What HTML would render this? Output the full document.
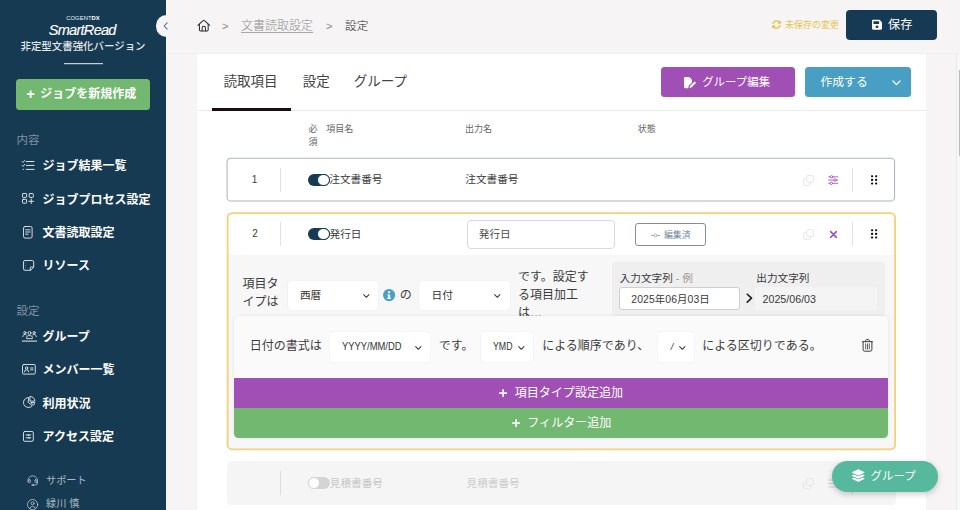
<!DOCTYPE html>
<html lang="ja">
<head>
<meta charset="utf-8">
<title>SmartRead - 設定</title>
<style>
*{box-sizing:border-box;margin:0;padding:0}
html,body{width:960px;height:510px;overflow:hidden}
body{position:relative;background:#f6f4f5;font-family:"Liberation Sans","Noto Sans CJK JP",sans-serif;color:#333;font-size:12px}
.abs{position:absolute;white-space:nowrap}
.t{position:absolute;white-space:nowrap;line-height:20px;height:20px}
svg{position:absolute;overflow:visible}
/* sidebar */
#side{position:absolute;left:0;top:0;width:166.200px;height:510px;background:#173a53;color:#fff}
#side .c{position:absolute;left:0;width:166px;text-align:center;white-space:nowrap}
#side .m{position:absolute;left:42.5px;font-weight:700;font-size:12px;line-height:20px;height:20px;white-space:nowrap;color:#fff}
#side .h{position:absolute;left:16.5px;font-size:11.5px;line-height:20px;height:20px;color:#7f92a1}
#side .s{position:absolute;left:46px;font-size:10.2px;line-height:20px;height:20px;color:#a9b8c3;white-space:nowrap}
#newjob{position:absolute;left:16px;top:79.300px;width:134.300px;height:30.300px;border-radius:3.5px;background:#72b870;color:#fff;font-weight:700;font-size:12px;line-height:30px;text-align:center;white-space:nowrap}
#collapse{position:absolute;left:155.600px;top:15.200px;width:21.800px;height:21.800px;border-radius:50%;background:#f6f4f5}
/* header */
#hdr{position:absolute;left:166px;top:0;width:794px;height:53.800px;border-bottom:1px solid #f0eeee;border-left:1px solid #faf9fa}
#save{position:absolute;left:846.200px;top:10px;width:91px;height:30px;border-radius:4px;background:#163a54}
/* panel */
#panel{position:absolute;left:196.500px;top:53.800px;width:729.500px;height:460px;background:#fff}
#tabline{position:absolute;left:196.500px;top:110px;width:729px;height:1px;background:#ebebeb}
#tabul{position:absolute;left:211.5px;top:107.7px;width:79px;height:3.3px;background:#1a0f0f}
.tab{position:absolute;font-size:13.500px;line-height:20px;height:20px;color:#444;white-space:nowrap}
.btn{position:absolute;top:67px;height:30px;border-radius:3.5px;color:#fff}
.colh{position:absolute;font-size:9px;line-height:13px;color:#666;font-weight:400;white-space:nowrap}
.row{position:absolute;left:227px;width:669px;border-radius:4.5px}
.vd{position:absolute;width:1px;background:#e2e2e2}
.tg{position:absolute;width:21.5px;height:12.4px;border-radius:7px;background:#163a54}
.tg i{position:absolute;right:0;top:0;width:12.400px;height:12.400px;border-radius:50%;background:#fff;border:1.100px solid #163a54}
.tg.off{background:#d4d4d4}
.tg.off i{right:auto;left:0;border-color:#d4d4d4}
.nm{position:absolute;font-size:10.650px;line-height:20px;height:20px;color:#3a3a3a;white-space:nowrap}
.sel{position:absolute;background:#fff;border-radius:4px;height:29.800px;box-shadow:0 0 0 0.600px #efefef}
.sel span{position:absolute;top:0;line-height:29px;font-size:10.650px;color:#333;white-space:nowrap}
.t12{position:absolute;font-size:12px;color:#3c3c3c;white-space:nowrap;line-height:20px}
.nar{font-family:"Liberation Sans",sans-serif}
</style>
</head>
<body>

<!-- ============ main header ============ -->
<div id="hdr"></div>
<svg style="left:196.800px;top:18.900px" width="13.600" height="12.800" viewBox="0 0 14 13" fill="none" stroke="#2b2b2b" stroke-width="1.050" stroke-linejoin="round" stroke-linecap="round"><path d="M0.900 6.400 L6.300 1.500 A1 1 0 0 1 7.700 1.500 L13.100 6.400"/><path d="M2.500 5.200 V11.100 A1.100 1.100 0 0 0 3.600 12.200 H10.400 A1.100 1.100 0 0 0 11.500 11.100 V5.200"/><path d="M5.300 12.100 V9 A1.700 1.700 0 0 1 8.700 9 V12.100"/></svg>
<div class="t" style="left:222px;top:16px;font-size:11px;color:#8a8a8a">&gt;</div>
<div class="t" style="left:241px;top:16px;font-size:12px;font-weight:300;color:#8e8e8e;text-decoration:underline;text-decoration-thickness:0.800px;text-decoration-color:#a8a8a8;text-underline-offset:2px">文書読取設定</div>
<div class="t" style="left:326px;top:16px;font-size:11px;color:#8a8a8a">&gt;</div>
<div class="t" style="left:345px;top:16px;font-size:11.700px;font-weight:300;color:#1e1e1e">設定</div>

<svg style="left:771.5px;top:20px" width="9" height="9" viewBox="0 0 512 512"><path fill="#e8c347" d="M370.7 133.3C339.5 104 298.900 87.900 255.800 88c-77.500.100-144.300 53.200-162.800 126.900-1.300 5.400-6.100 9.200-11.700 9.200H24.100c-7.500 0-13.200-6.800-11.800-14.200C33.900 94.900 134.800 8 256 8c66.400 0 126.800 26.100 171.300 68.700L463 41C478.100 25.900 504 36.600 504 57.900V192c0 13.300-10.700 24-24 24H345.900c-21.400 0-32.100-25.900-17-41l41.800-41.700zM32 296h134.100c21.400 0 32.100 25.900 17 41l-41.800 41.800c31.300 29.300 71.800 45.400 114.900 45.300 77.400-.100 144.300-53.100 162.800-126.800 1.300-5.400 6.100-9.200 11.700-9.200h57.300c7.500 0 13.200 6.800 11.800 14.200C478.100 417.100 377.200 504 256 504c-66.400 0-126.800-26.100-171.300-68.700L49 471c-15.100 15.100-41 4.400-41-16.900V320c0-13.300 10.700-24 24-24z"/></svg>
<div class="t" style="left:785px;top:14.5px;font-size:9px;color:#e8c347">未保存の変更</div>
<div id="save"></div>
<svg style="left:871.800px;top:19.300px" width="10" height="11.400" viewBox="0 0 448 512"><path fill="#fff" d="M433.900 129.900l-83.900-83.900A48 48 0 0 0 316.100 32H48C21.500 32 0 53.500 0 80v352c0 26.500 21.500 48 48 48h352c26.500 0 48-21.500 48-48V163.900a48 48 0 0 0-14.100-33.900zM224 416c-35.300 0-64-28.700-64-64 0-35.300 28.700-64 64-64s64 28.700 64 64c0 35.300-28.700 64-64 64zm96-304.500V212c0 6.600-5.400 12-12 12H76c-6.600 0-12-5.400-12-12V108c0-6.600 5.400-12 12-12h228.500c3.200 0 6.200 1.300 8.500 3.500l3.500 3.500A12 12 0 0 1 320 111.500z"/></svg>
<div class="t" style="left:888px;top:15px;font-size:12.2px;color:#fff">保存</div>

<!-- ============ white panel ============ -->
<div id="panel"></div>
<div id="tabline"></div>
<div id="tabul"></div>
<div class="tab" style="left:223.400px;top:71.500px">読取項目</div>
<div class="tab" style="left:302.850px;top:71.500px">設定</div>
<div class="tab" style="left:353.700px;top:71.500px">グループ</div>

<div class="btn" style="left:661px;width:133.5px;background:#a04fb5"></div>
<svg style="left:683.500px;top:76.500px" width="12" height="11.200" viewBox="0 0 12 11.200"><path fill="#fff" d="M0 1.100 A1.100 1.100 0 0 1 1.100 0 H5.300 L8 2.700 V5.400 L4.700 8.700 L4.300 11.200 H1.100 A1.100 1.100 0 0 1 0 10.100 Z"/><path fill="#fff" d="M5.600 10.900 L6 9.100 L10.300 4.800 A0.600 0.600 0 0 1 11.100 4.800 L11.700 5.400 A0.600 0.600 0 0 1 11.700 6.200 L7.400 10.500 Z"/></svg>
<div class="t" style="left:702.200px;top:72px;font-size:11.450px;color:#fff">グループ編集</div>

<div class="btn" style="left:805px;width:106px;background:#489fc3"></div>
<div class="t" style="left:820.500px;top:72px;font-size:11.800px;color:#fff">作成する</div>
<svg style="left:891.500px;top:80px" width="9" height="6" viewBox="0 0 9 6" fill="none" stroke="#fff" stroke-width="1.3" stroke-linecap="round" stroke-linejoin="round"><path d="M1 1 L4.500 4.600 L8 1"/></svg>

<!-- column headers -->
<div class="colh" style="left:308.500px;top:123px">必<br>須</div>
<div class="colh" style="left:326.300px;top:123px">項目名</div>
<div class="colh" style="left:465px;top:123px">出力名</div>
<div class="colh" style="left:637.700px;top:123px">状態</div>

<!-- ROWS-START -->
<!-- ===== row 1 ===== -->
<svg style="left:226px;top:157px" width="670" height="46" viewBox="0 0 670 46" fill="none"><rect x="1.050" y="1.250" width="667.500" height="42.800" rx="3.600" stroke="#a9b6c1" stroke-width="1.050" fill="#fff"/></svg>
<div class="nm" style="left:244.500px;width:20px;text-align:center;top:169.600px;font-size:10px">1</div>
<div class="vd" style="left:280.200px;top:167.800px;height:24px"></div>
<div class="tg" style="left:308px;top:173.500px"><i></i></div>
<div class="nm" style="left:329.300px;top:169.100px">注文書番号</div>
<div class="nm" style="left:465.300px;top:169.100px">注文書番号</div>
<svg class="cp" style="left:802.800px;top:174.700px" width="11" height="11" viewBox="0 0 11 11" fill="none" stroke="#e6e6e6" stroke-width="1"><rect x="3.700" y="0.600" width="6.700" height="6.700" rx="1.200"/><path d="M3.700 3.600 H1.800 A1.200 1.200 0 0 0 0.600 4.800 V9.200 A1.200 1.200 0 0 0 1.800 10.400 H6.200 A1.200 1.200 0 0 0 7.400 9.200 V7.300"/></svg>
<svg style="left:828px;top:174.600px" width="10.400" height="10.200" viewBox="0 0 11 11" fill="none" stroke="#a557b9" stroke-width="0.950" stroke-linecap="round"><path d="M0.500 2 H10.500 M0.500 5.500 H10.500 M0.500 9 H10.500"/><circle cx="3.800" cy="2" r="1.350" fill="#fff"/><circle cx="7.400" cy="5.500" r="1.350" fill="#fff"/><circle cx="3.400" cy="9" r="1.350" fill="#fff"/></svg>
<div class="vd" style="left:852px;top:167.800px;height:24px"></div>
<svg class="dh" style="left:870.800px;top:174.700px" width="6.600" height="9.800" viewBox="0 0 7 10" fill="#111"><rect x="0" y="0" width="2.300" height="2.300" rx="0.800"/><rect x="4.300" y="0" width="2.300" height="2.300" rx="0.800"/><rect x="0" y="3.850" width="2.300" height="2.300" rx="0.800"/><rect x="4.300" y="3.850" width="2.300" height="2.300" rx="0.800"/><rect x="0" y="7.700" width="2.300" height="2.300" rx="0.800"/><rect x="4.300" y="7.700" width="2.300" height="2.300" rx="0.800"/></svg>

<!-- ===== row 2 (expanded) ===== -->
<div class="abs" style="left:227px;top:212.500px;width:668.500px;height:237.300px;background:#f7f7f7;border-radius:5px;overflow:hidden"><div style="position:absolute;left:0;top:0;width:100%;height:42.250px;background:#fff"></div></div>
<svg style="left:226px;top:212px" width="671" height="239" viewBox="0 0 671 239" fill="none"><rect x="1.600" y="1.100" width="667.500" height="236.200" rx="4.600" stroke="#f3d07a" stroke-width="1.800"/></svg>
<div class="nm" style="left:245px;width:20px;text-align:center;top:224.400px;font-size:10px">2</div>
<div class="vd" style="left:280.200px;top:221.500px;height:24.500px"></div>
<div class="tg" style="left:308px;top:228.100px"><i></i></div>
<div class="nm" style="left:329.500px;top:223.500px">発行日</div>
<div class="abs" style="left:466.800px;top:220px;width:148px;height:29px;border:1px solid #d9d9e3;border-radius:4px;background:#fff"></div>
<div class="nm" style="left:478.800px;top:224.300px;color:#4a4a4a">発行日</div>
<div class="abs" style="left:635.400px;top:223.300px;width:70.400px;height:23.200px;border:1px solid #7b8f9e;border-radius:3px;background:#fff"></div>
<svg style="left:651px;top:232.500px" width="9" height="5" viewBox="0 0 9 5" fill="none" stroke="#7d8f9d" stroke-width="0.700"><circle cx="4.500" cy="2.500" r="1.500"/><path d="M0 2.500 H3 M6 2.500 H9"/></svg>
<div class="nm" style="left:664px;top:224.800px;font-size:8.900px;color:#71889a">編集済</div>
<svg class="cp" style="left:802.800px;top:228.700px" width="11" height="11" viewBox="0 0 11 11" fill="none" stroke="#e6e6e6" stroke-width="1"><rect x="3.700" y="0.600" width="6.700" height="6.700" rx="1.200"/><path d="M3.700 3.600 H1.800 A1.200 1.200 0 0 0 0.600 4.800 V9.200 A1.200 1.200 0 0 0 1.800 10.400 H6.200 A1.200 1.200 0 0 0 7.400 9.200 V7.300"/></svg>
<svg style="left:829.800px;top:230.900px" width="7" height="7" viewBox="0 0 7 7" fill="none" stroke="#a04fb5" stroke-width="1.550" stroke-linecap="round"><path d="M0.600 0.600 L6.400 6.400 M6.400 0.600 L0.600 6.400"/></svg>
<div class="vd" style="left:852px;top:221.500px;height:24.500px"></div>
<svg class="dh" style="left:870.800px;top:228.900px" width="6.600" height="9.800" viewBox="0 0 7 10" fill="#111"><rect x="0" y="0" width="2.300" height="2.300" rx="0.800"/><rect x="4.300" y="0" width="2.300" height="2.300" rx="0.800"/><rect x="0" y="3.850" width="2.300" height="2.300" rx="0.800"/><rect x="4.300" y="3.850" width="2.300" height="2.300" rx="0.800"/><rect x="0" y="7.700" width="2.300" height="2.300" rx="0.800"/><rect x="4.300" y="7.700" width="2.300" height="2.300" rx="0.800"/></svg>

<!-- type line -->
<div class="t12" style="left:242.600px;top:276px;line-height:17.800px">項目タ<br>イプは</div>
<div class="sel" style="left:288.100px;top:280.700px;width:89.700px"><span style="left:11.800px">西暦</span></div>
<svg class="chv" style="left:362.700px;top:293.900px" width="6.600" height="4.125" viewBox="0 0 8 5" fill="none" stroke="#3a3a3a" stroke-width="1.250" stroke-linecap="round" stroke-linejoin="round"><path d="M0.800 0.800 L4 4 L7.200 0.800"/></svg>
<svg style="left:383px;top:289.300px" width="12.200" height="12.200" viewBox="0 0 12 12"><circle cx="6" cy="6" r="6" fill="#4a9fc6"/><rect x="5" y="2.300" width="2" height="2" rx="0.500" fill="#fff"/><path d="M4.300 5.300 H7 V8.700 H7.900 V9.800 H4.200 V8.700 H5.100 V6.400 H4.300 Z" fill="#fff"/></svg>
<div class="t12" style="left:399.800px;top:284.600px">の</div>
<div class="sel" style="left:419.400px;top:280.700px;width:90.200px"><span style="left:12.200px">日付</span></div>
<svg class="chv" style="left:494.200px;top:293.900px" width="6.600" height="4.125" viewBox="0 0 8 5" fill="none" stroke="#3a3a3a" stroke-width="1.250" stroke-linecap="round" stroke-linejoin="round"><path d="M0.800 0.800 L4 4 L7.200 0.800"/></svg>
<div class="t12" style="left:518px;top:267.600px;line-height:18.250px">です。設定す<br>る項目加工<br>は…</div>

<!-- example box -->
<div class="abs" style="left:612px;top:262px;width:272.500px;height:60px;background:#efefef;border-radius:4px"></div>
<div class="nm" style="left:619.700px;top:267.900px">入力文字列 <span style="color:#999">- 例</span></div>
<div class="abs" style="left:619.400px;top:287px;width:120.600px;height:22.600px;background:#fff;border:1px solid #cfcfcf;border-radius:3px"></div>
<div class="nm nar" style="left:631.300px;top:288.500px;font-size:10.400px;letter-spacing:0.100px">2025<span style="font-family:'Noto Sans CJK JP',sans-serif">年</span>06<span style="font-family:'Noto Sans CJK JP',sans-serif">月</span>03<span style="font-family:'Noto Sans CJK JP',sans-serif">日</span></div>
<svg style="left:745.600px;top:292.600px" width="6.800" height="10.400" viewBox="0 0 6.500 10" fill="none" stroke="#222" stroke-width="1.600" stroke-linecap="round" stroke-linejoin="round"><path d="M1.200 1.200 L5.300 5 L1.200 8.800"/></svg>
<div class="nm" style="left:756.300px;top:267.900px">出力文字列</div>
<div class="abs" style="left:755.300px;top:287px;width:121.500px;height:22.600px;background:#f4f4f4;border-radius:3px"></div>
<div class="nm nar" style="left:762.500px;top:288.500px;font-size:10.700px">2025/06/03</div>

<!-- inner panel -->
<div class="abs" style="left:234px;top:316px;width:654px;height:122px;background:#fafafa;border-radius:4.500px;box-shadow:0 0 3px rgba(0,0,0,0.10)"></div>
<div class="t12" style="left:249.700px;top:335.600px">日付の書式は</div>
<div class="sel" style="left:330px;top:332.300px;width:100.300px"><span class="nar" style="left:11.800px;font-size:10.700px;transform:scaleX(0.880);transform-origin:0 50%">YYYY/MM/DD</span></div>
<svg class="chv" style="left:415.200px;top:345.700px" width="6.600" height="4.125" viewBox="0 0 8 5" fill="none" stroke="#3a3a3a" stroke-width="1.250" stroke-linecap="round" stroke-linejoin="round"><path d="M0.800 0.800 L4 4 L7.200 0.800"/></svg>
<div class="t12" style="left:438.700px;top:335.600px">です。</div>
<div class="sel" style="left:481.300px;top:332.300px;width:52.200px"><span class="nar" style="left:12.200px;font-size:10.700px;transform:scaleX(0.820);transform-origin:0 50%">YMD</span></div>
<svg class="chv" style="left:518.200px;top:345.700px" width="6.600" height="4.125" viewBox="0 0 8 5" fill="none" stroke="#3a3a3a" stroke-width="1.250" stroke-linecap="round" stroke-linejoin="round"><path d="M0.800 0.800 L4 4 L7.200 0.800"/></svg>
<div class="t12" style="left:542.200px;top:335.600px">による順序であり、</div>
<div class="sel" style="left:657.800px;top:332.300px;width:36px"><span class="nar" style="left:13px;font-size:9.500px;font-style:italic">/</span></div>
<svg class="chv" style="left:678.700px;top:345.700px" width="6.600" height="4.125" viewBox="0 0 8 5" fill="none" stroke="#3a3a3a" stroke-width="1.250" stroke-linecap="round" stroke-linejoin="round"><path d="M0.800 0.800 L4 4 L7.200 0.800"/></svg>
<div class="t12" style="left:702.200px;top:335.600px">による区切りである。</div>
<svg style="left:862.400px;top:339.200px" width="11" height="12.800" viewBox="0 0 11 12.800" fill="none" stroke="#3a3a3a" stroke-width="1" stroke-linecap="round" stroke-linejoin="round"><path d="M0.600 2.700 H10.400"/><path d="M3.600 2.600 V1.700 A1.100 1.100 0 0 1 4.700 0.600 H6.300 A1.100 1.100 0 0 1 7.400 1.700 V2.600"/><path d="M1.100 2.800 V10.600 A1.600 1.600 0 0 0 2.700 12.200 H8.300 A1.600 1.600 0 0 0 9.900 10.600 V2.800"/><path d="M3.700 4.900 V10 M5.500 4.900 V10 M7.300 4.900 V10" stroke-width="0.800"/></svg>
<div class="abs" style="left:234px;top:377.500px;width:654px;height:30px;background:#a04fb5"></div>
<div class="abs" style="left:234px;top:407.500px;width:654px;height:30.500px;background:#72b870;border-radius:0 0 4.500px 4.500px"></div>
<svg class="pl" style="left:499px;top:389px" width="8.200" height="8.200" viewBox="0 0 8 8" fill="none" stroke="#fff" stroke-width="1.600" stroke-linecap="round"><path d="M4 0.800 V7.200 M0.800 4 H7.200"/></svg>
<div class="t" style="left:514.700px;top:382.600px;font-size:12.050px;color:#fff">項目タイプ設定追加</div>
<svg class="pl" style="left:512px;top:419px" width="8.200" height="8.200" viewBox="0 0 8 8" fill="none" stroke="#fff" stroke-width="1.600" stroke-linecap="round"><path d="M4 0.800 V7.200 M0.800 4 H7.200"/></svg>
<div class="t" style="left:527.300px;top:412.700px;font-size:12.050px;color:#fff">フィルター追加</div>

<!-- ===== row 3 (disabled) ===== -->
<div class="row" style="top:461px;height:43.500px;background:#f5f5f5"></div>
<div class="vd" style="left:280.200px;top:471px;height:23.500px;background:#dcdcdc"></div>
<div class="tg off" style="left:308px;top:476.600px"><i></i></div>
<div class="nm" style="left:329.800px;top:472.800px;color:#c6c6c6">見積書番号</div>
<div class="nm" style="left:466.500px;top:472.800px;color:#cccccc">見積書番号</div>
<svg class="cp" style="left:802.800px;top:477.500px" width="11" height="11" viewBox="0 0 11 11" fill="none" stroke="#e6e6e6" stroke-width="1"><rect x="3.700" y="0.600" width="6.700" height="6.700" rx="1.200"/><path d="M3.700 3.600 H1.800 A1.200 1.200 0 0 0 0.600 4.800 V9.200 A1.200 1.200 0 0 0 1.800 10.400 H6.200 A1.200 1.200 0 0 0 7.400 9.200 V7.300"/></svg>
<svg style="left:828px;top:477.500px" width="11" height="11" viewBox="0 0 11 11" fill="none" stroke="#dcc6e2" stroke-width="0.900" stroke-linecap="round"><path d="M0.500 2 H10.500 M0.500 5.500 H10.500 M0.500 9 H10.500"/></svg>
<div class="vd" style="left:852px;top:471px;height:23.500px;background:#dcdcdc"></div>

<!-- floating group button -->
<div class="abs" style="left:831.500px;top:461.200px;width:106px;height:30.700px;border-radius:16px;background:#56b89c;box-shadow:0 2px 6px rgba(0,0,0,0.22)"></div>
<svg style="left:851.700px;top:469.300px" width="12.500" height="13" viewBox="0 0 512 512"><path fill="#fff" d="M12.400 148l232.900 105.700c6.800 3.100 14.500 3.100 21.300 0l232.900-105.700c16.600-7.500 16.600-32.500 0-40L266.700 2.300a25.600 25.600 0 0 0-21.300 0L12.400 108c-16.600 7.500-16.600 32.500 0 40zm487.200 88.300l-58.100-26.300-161.600 73.300c-7.600 3.400-15.600 5.200-23.900 5.200s-16.300-1.800-23.900-5.200L70.500 210l-58.100 26.300c-16.600 7.500-16.600 32.500 0 40l232.900 105.600c6.800 3.100 14.500 3.100 21.300 0L499.600 276.300c16.600-7.500 16.600-32.500 0-40zm0 127.800l-57.900-26.200-161.900 73.300c-7.600 3.400-15.600 5.200-23.900 5.200s-16.300-1.800-23.900-5.200L70.300 337.900 12.400 364.100c-16.600 7.500-16.600 32.500 0 40l232.900 105.600c6.800 3.100 14.500 3.100 21.300 0L499.600 404.100c16.600-7.500 16.600-32.500 0-40z"/></svg>
<div class="t" style="left:870.400px;top:466.300px;font-size:11.500px;color:#fff">グループ</div>
<!-- ROWS-END -->

<!-- ============ sidebar ============ -->
<div id="side">
  <div class="c" style="top:13.900px;font-size:5.800px;line-height:8px;letter-spacing:0.100px;color:#eaeff2">COGENT<b style="color:#fff">DX</b></div>
  <div class="c" style="top:20px;left:-0.800px;font-size:14.600px;line-height:20px;font-style:italic;letter-spacing:-0.750px;color:#fff;-webkit-text-stroke:0.150px #fff">SmartRead</div>
  <div class="c" style="top:37px;font-size:10.450px;font-weight:500;line-height:20px;color:#e3e8ec">非定型文書強化バージョン</div>
  <div class="abs" style="left:64px;top:63px;width:38.500px;height:1px;background:#c6d0d8;box-shadow:0 1px 0 rgba(198,208,216,0.220)"></div>
  <div id="newjob"><span style="position:absolute;left:10.600px;top:-0.500px;font-size:14px">+</span><span style="position:absolute;left:24.200px;top:0">ジョブを新規作成</span></div>
  <div class="h" style="top:130px">内容</div>
  <div class="m" style="top:156.200px">ジョブ結果一覧</div>
  <div class="m" style="top:189.500px">ジョブプロセス設定</div>
  <div class="m" style="top:222.700px">文書読取設定</div>
  <div class="m" style="top:255.700px">リソース</div>
  <div class="h" style="top:300.500px">設定</div>
  <div class="m" style="top:326.700px">グループ</div>
  <div class="m" style="top:360.000px">メンバー一覧</div>
  <div class="m" style="top:393.500px">利用状況</div>
  <div class="m" style="top:426.700px">アクセス設定</div>
  <div class="s" style="top:470.500px">サポート</div>
  <div class="s" style="top:494px">緑川 慎</div>
  <!-- ICONS-START -->
  <svg style="left:22px;top:160px" width="12.500" height="10.500" viewBox="0 0 12.500 10.500" fill="none" stroke="#e6ebef" stroke-width="0.950" stroke-linecap="round" stroke-linejoin="round"><path d="M4.200 1.500 H12.100 M4.200 5.400 H12.100 M4.200 9.400 H12.100"/><path d="M0.200 1.600 L1 2.500 L2.700 0.400 M0.200 5.500 L1 6.400 L2.700 4.300" stroke-width="0.850"/><circle cx="1.300" cy="9.400" r="0.600" fill="#e6ebef" stroke="none"/></svg>
  <svg style="left:22.100px;top:193.300px" width="11.900" height="10.700" viewBox="0 0 11.900 10.700" fill="none" stroke="#e6ebef" stroke-width="0.950" stroke-linecap="round" stroke-linejoin="round"><rect x="0.500" y="0.500" width="4.100" height="3.900" rx="0.700"/><rect x="7.200" y="0.500" width="4.100" height="3.900" rx="0.700"/><rect x="0.500" y="6.300" width="4.100" height="3.900" rx="0.700"/><path d="M6.900 8.300 H11.600 M9.250 6 V10.500"/></svg>
  <svg style="left:23px;top:225.600px" width="9.600" height="12.600" viewBox="0 0 9.600 12.600" fill="none" stroke="#e6ebef" stroke-width="0.900" stroke-linecap="round" stroke-linejoin="round"><rect x="0.500" y="0.500" width="8.600" height="11.600" rx="1.600"/><path d="M2.600 3.800 H7 M2.600 6 H7 M2.600 8.200 H5.200"/></svg>
  <svg style="left:22.500px;top:259.800px" width="11.200" height="10.800" viewBox="0 0 11.200 10.800" fill="none" stroke="#e6ebef" stroke-width="0.900" stroke-linecap="round" stroke-linejoin="round"><path d="M7.200 10.300 H2 A1.500 1.500 0 0 1 0.500 8.800 V2 A1.500 1.500 0 0 1 2 0.500 H9.200 A1.500 1.500 0 0 1 10.700 2 V6.900 Z"/><path d="M10.600 7 H8.300 A1 1 0 0 0 7.300 8 V10.200"/><circle cx="2.700" cy="3" r="0.350" fill="#e6ebef" stroke="none"/><circle cx="2.700" cy="5.400" r="0.350" fill="#e6ebef" stroke="none"/><circle cx="2.700" cy="7.800" r="0.350" fill="#e6ebef" stroke="none"/></svg>
  <svg style="left:22px;top:331.200px" width="15" height="10.800" viewBox="0 0 15 10.800" fill="none" stroke="#e6ebef" stroke-width="0.850" stroke-linecap="round" stroke-linejoin="round"><circle cx="7.500" cy="2" r="1.500"/><path d="M4.600 7.200 V6.400 A2 2 0 0 1 6.600 4.600 H8.400 A2 2 0 0 1 10.400 6.400 V7.200 Z"/><circle cx="2.900" cy="1.700" r="1.150"/><path d="M0.700 5.600 A2.200 2.200 0 0 1 4.300 3.900"/><circle cx="12.100" cy="1.700" r="1.150"/><path d="M14.300 5.600 A2.200 2.200 0 0 0 10.700 3.900"/><path d="M0.300 10.100 H14.700" stroke-width="1"/></svg>
  <svg style="left:22.400px;top:364px" width="13.800" height="10.600" viewBox="0 0 13.800 10.600" fill="none" stroke="#e6ebef" stroke-width="0.900" stroke-linecap="round" stroke-linejoin="round"><rect x="0.500" y="0.500" width="12.800" height="9.600" rx="1.300"/><circle cx="4.600" cy="4" r="1.200"/><path d="M2.500 7.800 A2.100 2.100 0 0 1 6.700 7.800"/><path d="M8.600 4 H11 M8.600 5.800 H11"/></svg>
  <svg style="left:22.500px;top:396.400px" width="12.400" height="12" viewBox="0 0 12.400 12" fill="none" stroke="#e6ebef" stroke-width="0.900" stroke-linecap="round" stroke-linejoin="round"><path d="M5.400 1.500 A5 5 0 1 0 9.300 9.700 L5.400 6.500 Z"/><path d="M7.300 0.500 A4.600 4.600 0 0 1 11.900 5.100 H7.300 Z"/><path d="M8.100 6.500 H11.800 A4.600 4.600 0 0 1 10.900 8.800 Z"/></svg>
  <svg style="left:22.700px;top:430.500px" width="10.800" height="10.800" viewBox="0 0 10.800 10.800" fill="none" stroke="#e6ebef" stroke-width="0.900" stroke-linecap="round" stroke-linejoin="round"><rect x="0.500" y="0.500" width="9.800" height="9.800" rx="1.300"/><path d="M3 4 H4.200 M6.200 4 H7.800 M3 6.800 H4.800 M6.800 6.800 H7.800"/><circle cx="5.200" cy="4" r="0.500" fill="#e6ebef"/><circle cx="5.800" cy="6.800" r="0.500" fill="#e6ebef"/></svg>
  <svg style="left:26.800px;top:474.700px" width="11.400" height="11.200" viewBox="0 0 11.400 11.200" fill="none" stroke="#b7c4cd" stroke-width="0.800" stroke-linecap="round" stroke-linejoin="round"><path d="M0.900 7.200 A5 5 0 1 1 10.500 7.200"/><rect x="1.600" y="4.800" width="1.900" height="2.800" rx="0.800"/><rect x="7.900" y="4.800" width="1.900" height="2.800" rx="0.800"/><path d="M10.400 7 V8 A2 2 0 0 1 8.400 10 H6.400"/><ellipse cx="5.600" cy="10" rx="1" ry="0.600"/></svg>
  <svg style="left:27px;top:498.600px" width="11.200" height="11.200" viewBox="0 0 11.200 11.200" fill="none" stroke="#b7c4cd" stroke-width="0.800" stroke-linecap="round" stroke-linejoin="round"><circle cx="5.600" cy="5.600" r="5.100"/><circle cx="5.600" cy="4.300" r="1.500"/><path d="M2.700 9.600 A3 3 0 0 1 8.500 9.600"/></svg>
  <!-- ICONS-END -->
</div>
<div id="collapse"></div>
<svg style="left:162.600px;top:22.300px" width="5.200" height="8" viewBox="0 0 5 8" fill="none" stroke="#4d6d83" stroke-width="1.050" stroke-linecap="round" stroke-linejoin="round"><path d="M4 0.800 L1 4 L4 7.200"/></svg>

<!-- scrollbar hint -->
<div class="abs" style="left:956.400px;top:53.500px;width:3.600px;height:457px;background:#f8f7f8;border-left:1px solid #e9e8ea"></div>
<div class="abs" style="left:958.700px;top:70px;width:1.300px;height:85.500px;background:#b9b9bd"></div>

</body>
</html>
